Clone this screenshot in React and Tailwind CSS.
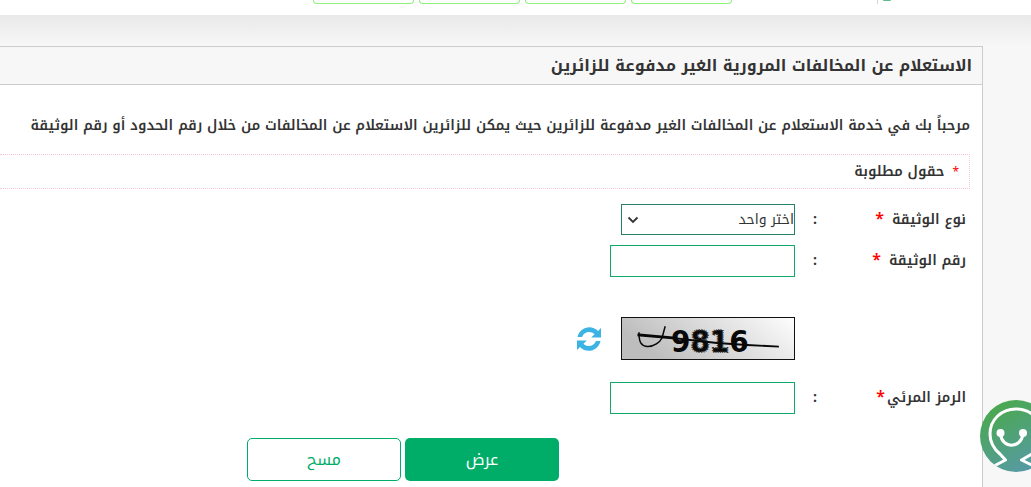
import React, { useState } from "react";

const navTabs = [1, 2, 3, 4];

function Header() {
  return (
    <header className="flex h-[15px] items-start bg-white pr-[140px]">
      <span className="h-px w-2 rounded-b bg-[#5cb98a]" />
      <span className="mr-[5px] h-1 w-px bg-gray-300" />
      <div className="mr-[145px] flex gap-[5px]">
        {navTabs.map((tab) => (
          <span
            key={tab}
            className="h-1 w-[101px] rounded-b-md border border-t-0 border-[#8ff07c]"
          />
        ))}
      </div>
    </header>
  );
}

function Row({ id, label, spaced, children }) {
  return (
    <div className="flex items-center">
      <div className="flex w-[149px] items-center">
        <label htmlFor={id} className="text-sm font-semibold">
          {label}
          <span className={`text-base leading-4 text-[#f00] ${spaced ? "mr-2" : "mr-0.5"}`}>*</span>
        </label>
      </div>
      <span className="w-[22px] text-sm font-bold">:</span>
      {children}
    </div>
  );
}

function Captcha() {
  return (
    <svg className="h-[43px] w-[174px] border border-[#111]" viewBox="0 0 172 41">
      <defs>
        <linearGradient id="captchaBg" x1="0" x2="1" y1="0.3" y2="0">
          <stop offset="0" stopColor="#bdbdbd" />
          <stop offset="1" stopColor="#fdfdfd" />
        </linearGradient>
      </defs>
      <rect width="172" height="41" fill="url(#captchaBg)" />
      <text
        x="49"
        y="34"
        direction="ltr"
        fontFamily="DejaVu Sans Condensed, DejaVu Sans, sans-serif"
        fontSize="31"
        fontWeight="bold"
        fill="#080808"
      >
        9
        <tspan stroke="#333" strokeWidth="2" strokeDasharray="1 1.200">81</tspan>
        6
      </text>
      <g fill="none" stroke="#080808" strokeLinecap="square">
        <path d="M17 17 L52 20" strokeWidth="3" />
        <path d="M50 20 L95 25 L125 27 L156 28.500" strokeWidth="1.800" />
        <path d="M17 15 C17 24 19 28 25 28.500 C32 29 38 24 40 20 L43 9" strokeWidth="1.500" />
      </g>
    </svg>
  );
}

function RefreshIcon() {
  return (
    <svg className="h-6 w-6" viewBox="0 0 24 24" fill="#3bb4e4">
      <path d="M24 1 V10.500 H14.200 L17.600 7.300 C14.200 4 7.500 3.700 5 10 H0.500 C2.500 0.500 14 -3.300 21 4 Z" />
      <path d="M0 23 V13.500 H9.800 L6.400 16.700 C9.800 20 16.500 20.300 19 14 H23.500 C21.500 23.500 10 27.300 3 20 Z" />
    </svg>
  );
}

function ChatBubble() {
  return (
    <svg className="h-[72px] w-[72px]" viewBox="0 0 72 72">
      <defs>
        <linearGradient id="chatBg" x1="0.2" x2="0.700" y1="0.100" y2="1">
          <stop offset="0" stopColor="#4aa850" />
          <stop offset="1" stopColor="#579aa8" />
        </linearGradient>
        <clipPath id="chatClip">
          <circle cx="36" cy="36" r="36" />
        </clipPath>
      </defs>
      <circle cx="36" cy="36" r="36" fill="url(#chatBg)" />
      <g
        fill="none"
        stroke="white"
        strokeWidth="3"
        strokeLinecap="round"
        strokeLinejoin="round"
        clipPath="url(#chatClip)"
      >
        <path d="M14 66 L25.500 60 L20 54 C14 49 10 42 10 34 C10 20 21 9 36 9 C51 9 62 20 62 34 C62 42 58 49 52 54 L41.500 60 L58 68" />
        <path d="M20.500 34 C22 49 41 49 43 34" />
      </g>
      <circle cx="20.500" cy="33" r="4" fill="white" />
      <circle cx="43" cy="33" r="4" fill="white" />
    </svg>
  );
}

export default function App() {
  const [form, setForm] = useState({ type: "", number: "", code: "" });

  const update = (e) => setForm({ ...form, [e.target.name]: e.target.value });

  return (
    <div
      dir="rtl"
      className="relative flex min-h-screen flex-col overflow-hidden bg-[#f7f7f7] font-['Noto_Kufi_Arabic','Open_Sans',sans-serif] text-[#333]"
    >
      <Header />

      <div className="h-[31px] bg-linear-to-b from-[#e9e9e9] to-[#f7f7f7]" />

      {/* CARD */}
      <main className="mr-12 flex-1 border-t border-r border-[#ccc] bg-white">
        <h1 className="flex h-[38px] items-center border-b border-[#ccc] bg-[#f7f7f7] pr-2.5 text-base font-bold whitespace-nowrap">
          الاستعلام عن المخالفات المرورية الغير مدفوعة للزائرين
        </h1>

        <p className="mt-[31px] pr-3 text-sm font-semibold whitespace-nowrap">
          مرحباً بك في خدمة الاستعلام عن المخالفات الغير مدفوعة للزائرين حيث يمكن للزائرين الاستعلام عن المخالفات من خلال رقم الحدود أو رقم الوثيقة
        </p>

        <div className="mt-[18px] mr-3 flex h-[35px] items-center border border-l-0 border-dotted border-[#fbc8d2] pr-2.5 text-sm font-semibold">
          <span className="ml-2 text-xs font-normal text-[#f00]">*</span>
          حقول مطلوبة
        </div>

        {/* FORM */}
        <form className="mt-[15px] pr-4" onSubmit={(e) => e.preventDefault()}>
          <Row id="type" label="نوع الوثيقة" spaced>
            <div className="relative">
              <select
                id="type"
                name="type"
                value={form.type}
                onChange={update}
                className="block h-[31px] w-[174px] appearance-none border border-[#26806a] bg-white text-sm"
              >
                <option value="">اختر واحد</option>
              </select>
              <svg className="pointer-events-none absolute top-3 left-1.5 h-2 w-3" viewBox="0 0 12 8">
                <path d="M1.500 1.500 L6 6 L10.500 1.500" fill="none" stroke="#333" strokeWidth="1.800" />
              </svg>
            </div>
          </Row>

          <div className="mt-2.5">
            <Row id="number" label="رقم الوثيقة" spaced>
              <input
                id="number"
                name="number"
                value={form.number}
                onChange={update}
                className="h-8 w-[185px] border border-[#0fa968] px-2 text-sm"
              />
            </Row>
          </div>

          <div className="mt-10 flex items-center gap-5 pr-[171px]">
            <Captcha />
            <button type="button">
              <RefreshIcon />
            </button>
          </div>

          <div className="mt-[22px]">
            <Row id="code" label="الرمز المرئي">
              <input
                id="code"
                name="code"
                value={form.code}
                onChange={update}
                className="h-8 w-[185px] border border-[#0fa968] px-2 text-sm"
              />
            </Row>
          </div>

          <div className="mt-6 flex gap-1 pr-[407px]">
            <button
              type="submit"
              className="h-[43px] w-[154px] rounded-[5px] bg-[#00ad68] text-base text-white"
            >
              عرض
            </button>
            <button
              type="reset"
              onClick={() => setForm({ type: "", number: "", code: "" })}
              className="h-[43px] w-[154px] rounded-[5px] border border-[#00ad68] bg-white text-base text-[#00ad68]"
            >
              مسح
            </button>
          </div>
        </form>
      </main>

      {/* CHAT */}
      <button type="button" className="absolute -right-[21px] bottom-[15px]">
        <ChatBubble />
      </button>
    </div>
  );
}
